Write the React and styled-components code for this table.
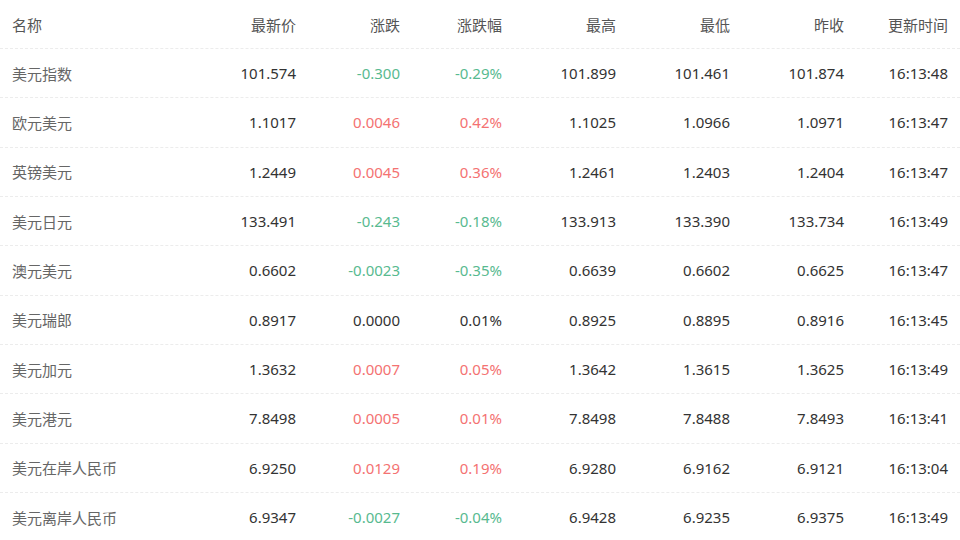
import React from 'react';
import styled, { createGlobalStyle } from 'styled-components';

const GlobalStyle = createGlobalStyle`
    body {
        margin: 0;
        background: #fff;
        font-family: "Noto Sans", "Noto Sans CJK SC", sans-serif;
    }
`

const COLS = '208px 100px 104px 102px 114px 114px 114px 104px';

const Table = styled.div`
    width: 960px;
    display: flex;
    flex-direction: column;
`

const HeadRow = styled.div`
    display: grid;
    grid-template-columns: ${COLS};
    height: 48px;
    align-items: center;
    border-bottom: 1px dashed #ececec;
`

const Row = styled.div`
    display: grid;
    grid-template-columns: ${COLS};
    height: 48.33px;
    align-items: center;
    border-bottom: ${props => props.last ? 'none' : '1px dashed #ececec'};
`

const HeadCell = styled.div`
    font-size: 15px;
    color: #555;
    padding: 0 12px;
    text-align: ${props => props.left ? 'left' : 'right'};
`

const Name = styled.div`
    font-size: 15px;
    color: #666;
    padding: 0 12px;
`

const Cell = styled.div`
    font-size: 15px;
    padding: 0 12px;
    text-align: right;
    color: ${props => props.tone === 'up' ? '#f47272' : props.tone === 'down' ? '#58ba90' : '#333'};
`

const headers = ['最新价', '涨跌', '涨跌幅', '最高', '最低', '昨收', '更新时间'];

const rows = [
    ['美元指数', '101.574', '-0.300', '-0.29%', '101.899', '101.461', '101.874', '16:13:48'],
    ['欧元美元', '1.1017', '0.0046', '0.42%', '1.1025', '1.0966', '1.0971', '16:13:47'],
    ['英镑美元', '1.2449', '0.0045', '0.36%', '1.2461', '1.2403', '1.2404', '16:13:47'],
    ['美元日元', '133.491', '-0.243', '-0.18%', '133.913', '133.390', '133.734', '16:13:49'],
    ['澳元美元', '0.6602', '-0.0023', '-0.35%', '0.6639', '0.6602', '0.6625', '16:13:47'],
    ['美元瑞郎', '0.8917', '0.0000', '0.01%', '0.8925', '0.8895', '0.8916', '16:13:45'],
    ['美元加元', '1.3632', '0.0007', '0.05%', '1.3642', '1.3615', '1.3625', '16:13:49'],
    ['美元港元', '7.8498', '0.0005', '0.01%', '7.8498', '7.8488', '7.8493', '16:13:41'],
    ['美元在岸人民币', '6.9250', '0.0129', '0.19%', '6.9280', '6.9162', '6.9121', '16:13:04'],
    ['美元离岸人民币', '6.9347', '-0.0027', '-0.04%', '6.9428', '6.9235', '6.9375', '16:13:49'],
];

function tone(change) {
    const v = parseFloat(change);
    if (v > 0) return 'up';
    if (v < 0) return 'down';
    return 'flat';
}

export default function App() {
    return (
        <>
            <GlobalStyle />
            <Table>
                <HeadRow>
                    <HeadCell left>名称</HeadCell>
                    {headers.map(h => <HeadCell key={h}>{h}</HeadCell>)}
                </HeadRow>
                {rows.map((r, i) => {
                    const t = tone(r[2]);
                    // 0.0000 with a positive pct still reads as flat in the source
                    const pctTone = r[2] === '0.0000' ? 'flat' : t;
                    return (
                        <Row key={r[0]} last={i === rows.length - 1}>
                            <Name>{r[0]}</Name>
                            <Cell>{r[1]}</Cell>
                            <Cell tone={t}>{r[2]}</Cell>
                            <Cell tone={pctTone}>{r[3]}</Cell>
                            <Cell>{r[4]}</Cell>
                            <Cell>{r[5]}</Cell>
                            <Cell>{r[6]}</Cell>
                            <Cell>{r[7]}</Cell>
                        </Row>
                    );
                })}
            </Table>
        </>
    );
}
